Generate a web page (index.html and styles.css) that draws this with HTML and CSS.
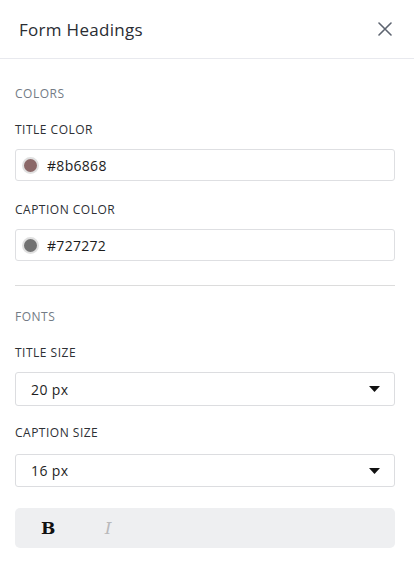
FILE: index.html
```html
<!DOCTYPE html>
<html>
<head>
<meta charset="utf-8">
<link rel="stylesheet" href="styles.css">
</head>
<body>
<div class="panel">
  <header class="header">
    <h1 class="title">Form Headings</h1>
    <button class="close" aria-label="Close">
      <svg width="14" height="14" viewBox="0 0 14 14"><path d="M1 1L13 13M13 1L1 13" stroke="#5d6470" stroke-width="1.6" stroke-linecap="round"/></svg>
    </button>
  </header>
  <section class="section">
    <div class="section-title first">COLORS</div>
    <div class="label">TITLE COLOR</div>
    <div class="field">
      <span class="swatch swatch-title"></span>
      <span class="value">#8b6868</span>
    </div>
    <div class="label">CAPTION COLOR</div>
    <div class="field">
      <span class="swatch swatch-caption"></span>
      <span class="value">#727272</span>
    </div>
  </section>
  <hr class="divider">
  <section class="section">
    <div class="section-title">FONTS</div>
    <div class="label">TITLE SIZE</div>
    <div class="select">
      <span class="select-value">20 px</span>
      <svg class="caret" width="11" height="6" viewBox="0 0 11 6"><path d="M0 0H11L5.5 6Z" fill="#111"/></svg>
    </div>
    <div class="label">CAPTION SIZE</div>
    <div class="select second">
      <span class="select-value">16 px</span>
      <svg class="caret" width="11" height="6" viewBox="0 0 11 6"><path d="M0 0H11L5.5 6Z" fill="#111"/></svg>
    </div>
    <div class="toolbar">
      <span class="tb-btn tb-bold">B</span>
      <span class="tb-btn tb-italic">I</span>
    </div>
  </section>
</div>
</body>
</html>
```
FILE: styles.css
```css
* { box-sizing: border-box; }
body {
  margin: 0;
  background: #fff;
  font-family: "Open Sans", "DejaVu Sans", sans-serif;
  color: #222;
}
.panel { width: 414px; }
.header {
  height: 59px;
  border-bottom: 1px solid #e8e9ee;
  display: flex;
  align-items: center;
  justify-content: space-between;
  padding: 0 22px 0 19px;
}
.title {
  margin: 0;
  font-size: 17px;
  font-weight: 400;
  color: #2a2d33;
  letter-spacing: 0.3px;
}
.close {
  border: 0;
  background: none;
  padding: 0;
  width: 14px;
  height: 14px;
  display: flex;
}
.section { padding: 0 19px 0 15px; }
.section-title {
  font-size: 12px;
  color: #737b85;
  height: 16px;
  line-height: 16px;
  margin-top: 23px;
  letter-spacing: 0.5px;
}
.section-title.first { margin-top: 27px; }
.label {
  font-size: 12px;
  color: #2d3035;
  height: 16px;
  line-height: 16px;
  margin-top: 20px;
  letter-spacing: 0.5px;
}
.field {
  margin-top: 11px;
  height: 32px;
  border: 1px solid #dedfe2;
  border-radius: 3px;
  display: flex;
  align-items: center;
  padding-left: 6px;
}
.field + .label { margin-top: 21px; }
.swatch {
  width: 17px;
  height: 17px;
  border-radius: 50%;
  border: 2px solid #e0e0e0;
  margin-right: 8px;
}
.swatch-title { background: #8b6868; }
.swatch-caption { background: #727272; }
.value {
  font-size: 14px;
  color: #1c1c1c;
  letter-spacing: 0.3px;
}
.divider {
  margin: 24px 19px 0 15px;
  border: 0;
  border-top: 1px solid #dcdcdc;
  height: 0;
}
.select {
  margin-top: 11px;
  height: 34px;
  border: 1px solid #dcdde0;
  border-radius: 3px;
  display: flex;
  align-items: center;
  justify-content: space-between;
  padding: 0 14px 0 15px;
}
.select.second { margin-top: 13px; height: 33px; }
.select-value {
  font-size: 14px;
  color: #1f1f1f;
  letter-spacing: 0.4px;
}
.select + .label { margin-top: 19px; }
.toolbar {
  margin-top: 21px;
  height: 40px;
  background: #eeeff1;
  border-radius: 5px;
  display: flex;
  align-items: center;
  padding-left: 26px;
  gap: 46px;
}
.tb-btn {
  font-family: "DejaVu Serif", "Liberation Serif", serif;
  font-size: 17px;
  width: 14px;
  text-align: center;
}
.tb-bold { font-weight: 700; color: #111; }
.tb-italic { font-style: italic; color: #b9b9bb; }
```
